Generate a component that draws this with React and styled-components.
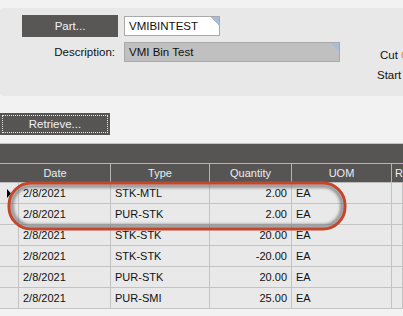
import React from "react";
import styled, { createGlobalStyle } from "styled-components";

// Grid data
const rows = [
  { date: "2/8/2021", type: "STK-MTL", qty: "2.00", uom: "EA", current: true },
  { date: "2/8/2021", type: "PUR-STK", qty: "2.00", uom: "EA" },
  { date: "2/8/2021", type: "STK-STK", qty: "20.00", uom: "EA" },
  { date: "2/8/2021", type: "STK-STK", qty: "-20.00", uom: "EA" },
  { date: "2/8/2021", type: "PUR-STK", qty: "20.00", uom: "EA" },
  { date: "2/8/2021", type: "PUR-SMI", qty: "25.00", uom: "EA" },
];

const GlobalStyle = createGlobalStyle`
  html, body {
    margin: 0;
    padding: 0;
    background: #f2f2f3;
    overflow: hidden;
  }
  body {
    font-family: "Liberation Sans", Arial, sans-serif;
    font-size: 11px;
    color: #111;
  }
`;

const App = () => {
  return (
    <Page>
      <GlobalStyle />
      <TopPanel>
        <PanelRow>
          <DarkButton>Part...</DarkButton>
          <Field $width={96}>VMIBINTEST</Field>
        </PanelRow>
        <PanelRow $gap={5}>
          <Label>Description:</Label>
          <Field $width={216} $grey>VMI Bin Test</Field>
          <SideLabel $offset={40}>
            Cut <Orange>O</Orange>
          </SideLabel>
        </PanelRow>
        <StartRow>Start</StartRow>
      </TopPanel>

      <RetrieveButton>Retrieve...</RetrieveButton>

      <Grid>
        <GridBand />
        <HeaderRow>
          <HeadCell $w={111}>Date</HeadCell>
          <HeadCell $w={99}>Type</HeadCell>
          <HeadCell $w={82}>Quantity</HeadCell>
          <HeadCell $w={100}>UOM</HeadCell>
          <HeadCell $last>R</HeadCell>
        </HeaderRow>
        {rows.map((r, i) => (
          <Row key={i}>
            <RowHead>
              {r.current && (
                <svg width="4" height="9" viewBox="0 0 4 9">
                  <polygon points="0,0 4,4.5 0,9" fill="#000" />
                </svg>
              )}
            </RowHead>
            <Cell>{r.date}</Cell>
            <Cell>{r.type}</Cell>
            <Cell $right>{r.qty}</Cell>
            <Cell>{r.uom}</Cell>
            <Cell />
          </Row>
        ))}
        <Highlight width="346" height="56" viewBox="0 0 346 56">
          <defs>
            <filter id="soft" x="-10%" y="-30%" width="120%" height="160%">
              <feGaussianBlur stdDeviation="1.8" />
            </filter>
          </defs>
          <rect
            x="7"
            y="6"
            width="330"
            height="40"
            rx="19"
            fill="none"
            stroke="#6a6a6a"
            strokeOpacity="0.75"
            strokeWidth="3.5"
            filter="url(#soft)"
          />
          <rect
            x="4"
            y="3"
            width="336"
            height="46"
            rx="22"
            fill="none"
            stroke="#c4472c"
            strokeWidth="3"
          />
        </Highlight>
      </Grid>
    </Page>
  );
};

const Page = styled.div`
  width: 403px;
  height: 316px;
  overflow: hidden;
  padding-top: 8px;
  box-sizing: border-box;
`;

const TopPanel = styled.div`
  height: 88px;
  background: #e8e8e8;
  border-radius: 4px 0 0 4px;
  padding: 7px 0 0 22px;
  box-sizing: border-box;
  white-space: nowrap;
  overflow: hidden;
`;

const PanelRow = styled.div`
  display: flex;
  align-items: center;
  margin-top: ${(p) => p.$gap || 0}px;
  & > * {
    flex-shrink: 0;
  }
`;

const DarkButton = styled.div`
  width: 96px;
  height: 22px;
  background: #595755;
  color: #eef2fb;
  display: flex;
  align-items: center;
  justify-content: center;
  margin-right: 6px;
  font-size: 11.5px;
`;

const Field = styled.div`
  width: ${(p) => p.$width}px;
  height: 20px;
  box-sizing: border-box;
  border: 1px solid #a9a9a9;
  background-color: ${(p) => (p.$grey ? "#c0c0c0" : "#ffffff")};
  background-image: linear-gradient(to bottom left, #aabdd8 50%, transparent 50%);
  background-size: 8px 8px;
  background-position: top right;
  background-repeat: no-repeat;
  padding: 0 4px;
  display: flex;
  align-items: center;
  font-size: 11.5px;
  color: #111;
`;

const Label = styled.div`
  width: 93px;
  margin-right: 9px;
  text-align: right;
  font-size: 11.5px;
`;

const SideLabel = styled.div`
  margin-left: ${(p) => p.$offset}px;
  margin-top: 6px;
  font-size: 11.5px;
`;

const Orange = styled.span`
  color: #e8901a;
`;

const StartRow = styled.div`
  margin: 7px 0 0 355px;
  font-size: 11.5px;
`;

const RetrieveButton = styled.div`
  margin-top: 17px;
  width: 110px;
  height: 22px;
  background: #575553;
  color: #eef2fb;
  display: flex;
  align-items: center;
  justify-content: center;
  outline: 1px dotted #e6e6e6;
  outline-offset: -3px;
  font-size: 11.5px;
`;

const Grid = styled.div`
  position: relative;
  margin-top: 8px;
  border-top: 1px solid #c4c4c4;
  width: 403px;
`;

const GridBand = styled.div`
  height: 19px;
  background: #575553;
  border-bottom: 1px solid #b4b4b4;
`;

const HeaderRow = styled.div`
  display: flex;
  height: 19px;
  background: #575553;
  border-bottom: 1px solid #bcbcbc;
  box-sizing: border-box;
`;

const HeadCell = styled.div`
  ${(p) => (p.$last ? "flex: 1;" : `width: ${p.$w}px;`)}
  flex-shrink: 0;
  box-sizing: border-box;
  border-right: ${(p) => (p.$last ? "none" : "1px solid #b4b4b4")};
  color: #e9edf5;
  display: flex;
  align-items: center;
  justify-content: ${(p) => (p.$last ? "flex-start" : "center")};
  padding-left: ${(p) => (p.$last ? 3 : 0)}px;
  overflow: hidden;
  white-space: nowrap;
`;

const Row = styled.div`
  display: grid;
  grid-template-columns: 19px 92px 99px 82px 100px 1fr;
  height: 21px;
  background: #e9e9e9;
  border-bottom: 1px solid #c3c3c3;
  box-sizing: border-box;
`;

const RowHead = styled.div`
  border-right: 1px solid #c3c3c3;
  display: flex;
  align-items: center;
  padding-left: 7px;
  padding-top: 1px;
`;

const Cell = styled.div`
  border-right: 1px solid #c3c3c3;
  display: flex;
  align-items: center;
  justify-content: ${(p) => (p.$right ? "flex-end" : "flex-start")};
  padding: 0 ${(p) => (p.$right ? 4 : 0)}px 0 ${(p) => (p.$right ? 0 : 4)}px;
  white-space: nowrap;
  overflow: hidden;
  color: #111;
`;

const Highlight = styled.svg`
  position: absolute;
  left: 5px;
  top: 36px;
  pointer-events: none;
`;

export default App;
